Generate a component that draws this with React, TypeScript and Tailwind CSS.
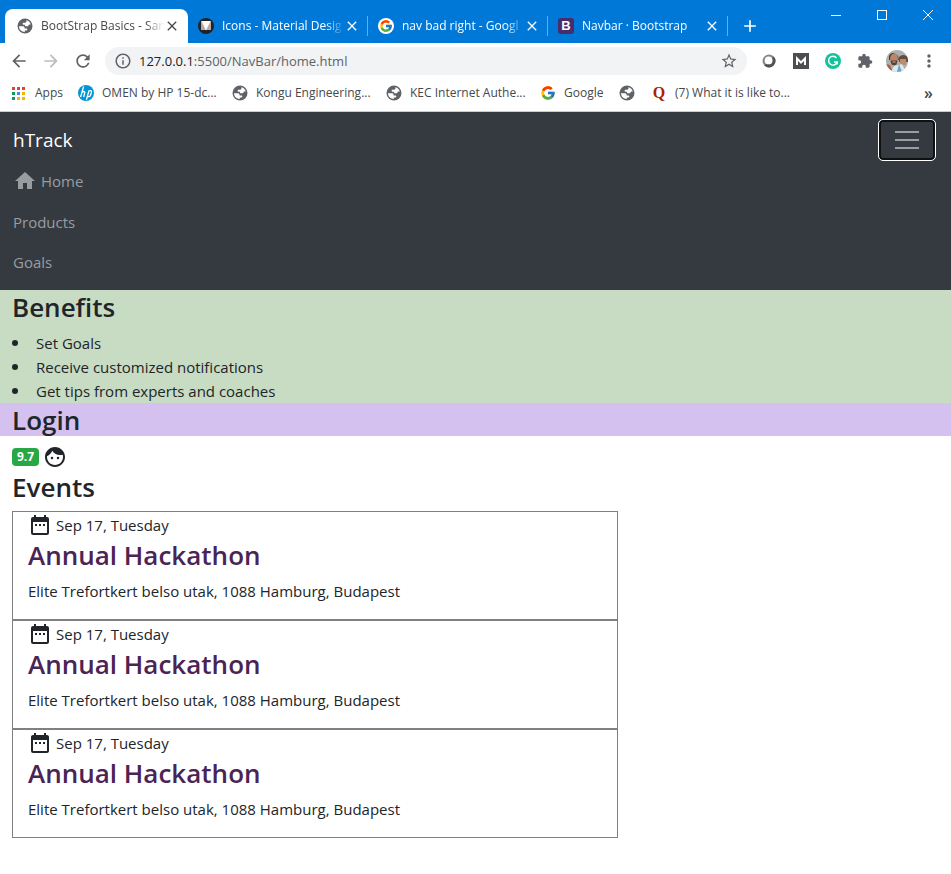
import React from "react";
import { FcGoogle } from "react-icons/fc";
import {
  MdClose,
  MdDateRange,
  MdExtension,
  MdFace,
  MdHome,
  MdStarBorder,
  MdArrowBack,
  MdArrowForward,
  MdRefresh,
  MdMoreVert,
  MdInfoOutline,
  MdAdd,
} from "react-icons/md";

function Globe() {
  return (
    <svg viewBox="0 0 16 16" className="size-4 shrink-0" aria-hidden="true">
      <circle cx="8" cy="8" r="7.5" fill="#5f6368" />
      <path
        d="M2 8.200h3.600c1.200 0 2 .7 2 1.700v.6h1.700c.6 0 1 .4 1 .9s-.4.9-1 1H7.800v1.500C4.600 13.800 2 11.400 2 8.200zM9.400 2.200c2.200.5 3.900 2.200 4.400 4.400h-1.500c-.4 0-.8.2-.8.7 0 .6-.5 1-1.100 1H9.100c-.7 0-1.200-.4-1.200-1V6.700H6.500c-.5 0-.9-.4-.9-.9 0-.6.4-1 1-1h1.600c.7 0 1.200-.5 1.200-1.200z"
        fill="#fff"
      />
    </svg>
  );
}

function MaterialIcon() {
  return (
    <svg viewBox="0 0 16 16" className="size-4 shrink-0" aria-hidden="true">
      <circle cx="8" cy="8" r="8" fill="#1f2226" />
      <path d="M3 3h10v9H3z" fill="#b9aaa2" />
      <path d="M3.500 3h9L8 12.500z" fill="#fff" />
    </svg>
  );
}

function GoogleDisc() {
  return (
    <span className="grid size-4 shrink-0 place-items-center rounded-full bg-white">
      <FcGoogle className="size-[14px]" />
    </span>
  );
}

function BootstrapIcon() {
  return (
    <span className="grid size-4 shrink-0 place-items-center rounded-[3px] bg-[#4a2c6b] font-['Liberation_Sans'] text-[13px] leading-4 font-bold text-white">
      B
    </span>
  );
}

const tabs = [
  { title: "Icons - Material Desig", icon: <MaterialIcon /> },
  { title: "nav bad right - Googl", icon: <GoogleDisc /> },
  { title: "Navbar · Bootstrap", icon: <BootstrapIcon /> },
];

const tabTitle = "ml-2 flex-1 overflow-hidden whitespace-nowrap mask-r-from-85% mask-r-to-100%";

function TabStrip() {
  return (
    <div className="flex h-[43px] items-end bg-[#0078d7] pl-[5px] text-[12px] text-white">
      <div className="flex h-[34px] w-[183px] items-center rounded-t-lg bg-white pr-2 pl-3 text-[#45494d]">
        <Globe />
        <span className={tabTitle}>BootStrap Basics - San</span>
        <button type="button" aria-label="Close tab">
          <MdClose className="size-4" />
        </button>
      </div>
      {tabs.map((tab) => (
        <div key={tab.title} className="flex h-[34px] w-[180px] items-center pl-[10px]">
          {tab.icon}
          <span className={tabTitle}>{tab.title}</span>
          <button type="button" aria-label="Close tab" className="mr-[7px]">
            <MdClose className="size-4" />
          </button>
          <span className="h-5 w-px bg-[#66aee7]" />
        </div>
      ))}
      <button type="button" aria-label="New tab" className="ml-3 grid h-[34px] place-items-center">
        <MdAdd className="size-5" />
      </button>
      <div className="ml-auto flex self-start pt-[6px]">
        <button type="button" aria-label="Minimize" className="grid h-[18px] w-[46px] place-items-center">
          <span className="h-px w-[10px] bg-white" />
        </button>
        <button type="button" aria-label="Maximize" className="grid h-[18px] w-[46px] place-items-center">
          <span className="size-[10px] border border-white" />
        </button>
        <button type="button" aria-label="Close" className="grid h-[18px] w-[46px] place-items-center">
          <svg viewBox="0 0 10 10" className="size-[10px]">
            <path d="M0 0l10 10M10 0L0 10" stroke="#fff" />
          </svg>
        </button>
      </div>
    </div>
  );
}

function Toolbar() {
  return (
    <div className="flex h-9 items-center pr-3 pl-[9px] text-[#5f6368]">
      <button type="button" aria-label="Back">
        <MdArrowBack className="size-5" />
      </button>
      <button type="button" aria-label="Forward" className="ml-3 text-[#babcbe]">
        <MdArrowForward className="size-5" />
      </button>
      <button type="button" aria-label="Reload" className="ml-3">
        <MdRefresh className="size-5" />
      </button>
      <div className="ml-3 flex h-7 flex-1 items-center rounded-full bg-[#f1f3f4] px-[9px]">
        <MdInfoOutline className="size-[18px]" />
        <span className="ml-[7px] flex-1 text-[13px]">
          <span className="text-[#202124]">127.0.0.1</span>:5500/NavBar/home.html
        </span>
        <button type="button" aria-label="Bookmark">
          <MdStarBorder className="size-[18px]" />
        </button>
      </div>
      <div className="ml-[14px] flex items-center gap-4">
        <svg viewBox="0 0 16 16" className="size-4">
          <circle cx="8" cy="8" r="6.500" fill="#85888b" />
          <path d="M12.600 3.400a6.500 6.500 0 0 1-9.200 9.200z" fill="#505356" />
          <circle cx="7.600" cy="7.400" r="3.900" fill="#fff" />
        </svg>
        <svg viewBox="0 0 16 16" className="size-4">
          <path fill="#4c4f52" d="M0 0h16v16H0z" />
          <path d="M4 12V5.500l4 4 4-4V12" fill="none" stroke="#fff" strokeWidth="2" />
        </svg>
        <svg viewBox="0 0 16 16" className="size-4">
          <circle cx="8" cy="8" r="8" fill="#15c39a" />
          <path d="M11.500 5A4.400 4.400 0 1 0 12.200 9H9M12.200 9v2.500" fill="none" stroke="#fff" strokeWidth="1.400" />
        </svg>
        <MdExtension className="size-4" />
      </div>
      <svg viewBox="0 0 22 22" className="ml-[13px] size-[22px]">
        <clipPath id="avatar">
          <circle cx="11" cy="11" r="11" />
        </clipPath>
        <g clipPath="url(#avatar)">
          <path fill="#a9b2af" d="M0 0h22v22H0z" />
          <path fill="#6b4a3d" d="M13 7q4-4 9 0v5h-9z" />
          <path fill="#c08a6c" d="M14 9h6v6h-6z" />
          <path fill="#3f3836" d="M3 6q3-6 9 0l1 4H3z" />
          <ellipse cx="8" cy="9" rx="4" ry="5.500" fill="#bd8569" />
          <path fill="#5a3f36" d="M4.500 10.500h7l-1 4-2.500 1-2.500-1z" />
          <path fill="#dcae93" d="M6.500 11.500h3v1h-3z" />
          <path fill="#b0603c" d="M0 14l4 1 3 7H0z" />
          <path fill="#dce9ef" d="M5 22l3-6 8-2 4 8z" />
          <path fill="#69a6ca" d="M11 22l2-8 3 8z" />
        </g>
      </svg>
      <button type="button" aria-label="Menu" className="ml-[11px]">
        <MdMoreVert className="size-5" />
      </button>
    </div>
  );
}

const appColors = [
  "bg-[#db4437]", "bg-[#db4437]", "bg-[#db4437]",
  "bg-[#0f9d58]", "bg-[#4285f4]", "bg-[#f4b400]",
  "bg-[#0f9d58]", "bg-[#f4b400]", "bg-[#f4b400]",
];

function Bookmarks() {
  return (
    <div className="flex h-[33px] items-center border-b border-[#c9cbcd] pb-1 pl-3 text-[12px] whitespace-nowrap text-[#45494d]">
      <a href="#apps" className="flex w-[66px] items-center">
        <span className="mr-[10px] grid grid-cols-3 gap-[2px]">
          {appColors.map((c, i) => (
            <span key={i} className={"size-[3px] " + c} />
          ))}
        </span>
        Apps
      </a>
      <a href="#omen" className="flex w-[154px] items-center gap-2">
        <svg viewBox="0 0 16 16" className="size-4">
          <circle cx="8" cy="8" r="8" fill="#0096d6" />
          <path
            d="M5.600 1.500L2.600 12M3.800 7.600q2.600-2.200 3 0L5.600 12M8.400 14.800L11 5.800q3.200-1 2.400 1.700l-1 3q-.7 1.600-3 .9"
            fill="none"
            stroke="#fff"
            strokeWidth="1.300"
          />
        </svg>
        OMEN by HP 15-dc...
      </a>
      <a href="#kongu" className="flex w-[154px] items-center gap-2">
        <Globe />
        Kongu Engineering...
      </a>
      <a href="#kec" className="flex w-[154px] items-center gap-2">
        <Globe />
        KEC Internet Authe...
      </a>
      <a href="#google" className="flex w-[79px] items-center gap-2">
        <FcGoogle className="size-4" />
        Google
      </a>
      <a href="#site" aria-label="Site" className="flex w-8 items-center">
        <Globe />
      </a>
      <a href="#quora" className="flex items-center gap-2">
        <span className="w-4 text-center font-['Liberation_Serif'] text-[16px] leading-4 font-bold text-[#a82400]">Q</span>
        (7) What it is like to...
      </a>
      <button type="button" aria-label="More bookmarks" className="mr-[18px] ml-auto text-[16px] leading-4 font-semibold">
        »
      </button>
    </div>
  );
}

const heading = "text-[26px] leading-[34px] font-semibold";

function EventCard() {
  return (
    <article className="border border-[#808080] px-[15px] pb-4">
      <p className="flex h-[26px] items-center gap-1">
        <MdDateRange className="size-6" />
        Sep 17, Tuesday
      </p>
      <h3 className={heading + " mb-[7px] text-[#4b2354]"}>Annual Hackathon</h3>
      <p>Elite Trefortkert belso utak, 1088 Hamburg, Budapest</p>
    </article>
  );
}

export default function App() {
  return (
    <div className="min-h-screen bg-white font-['Open_Sans','Noto_Sans',sans-serif] text-[15px] leading-6 text-[#212529]">
      <header>
        <TabStrip />
        <Toolbar />
        <Bookmarks />
      </header>
      <nav className="bg-[#343a40] py-2 pr-4 pl-[13px]">
        <div className="flex h-10 items-center justify-between">
          <a href="#home" className="text-[19px] text-white">hTrack</a>
          <button
            type="button"
            aria-label="Toggle navigation"
            className="flex h-10 w-14 flex-col items-center justify-center gap-[6px] rounded border-2 border-[#101010] outline outline-white"
          >
            <span className="h-[2px] w-6 bg-[#9a9da0]" />
            <span className="h-[2px] w-6 bg-[#9a9da0]" />
            <span className="h-[2px] w-6 bg-[#9a9da0]" />
          </button>
        </div>
        <ul className="text-[#999da0]">
          <li>
            <a href="#home" className="flex h-[42px] items-center gap-1">
              <MdHome className="size-6" />
              Home
            </a>
          </li>
          <li>
            <a href="#products" className="flex h-10 items-center">Products</a>
          </li>
          <li>
            <a href="#goals" className="flex h-10 items-center">Goals</a>
          </li>
        </ul>
      </nav>
      <main>
        <section className="bg-[#c8dbc3] px-3">
          <h2 className={heading + " mb-[7px]"}>Benefits</h2>
          <ul className="list-inside list-disc marker:text-[17px]">
            <li className="h-6">Set Goals</li>
            <li className="h-6">Receive customized notifications</li>
            <li className="h-6">Get tips from experts and coaches</li>
          </ul>
        </section>
        <section className="mb-2 bg-[#d4c1f0] px-3">
          <h2 className={heading + " h-[33px]"}>Login</h2>
        </section>
        <section className="w-2/3 pr-4 pl-3">
          <div className="flex h-[26px] items-center gap-1">
            <span className="rounded bg-[#28a745] px-[5px] text-[12px] leading-[18px] font-bold text-white">9.7</span>
            <MdFace className="size-6" />
          </div>
          <h2 className={heading + " mb-[7px]"}>Events</h2>
          <EventCard />
          <EventCard />
          <EventCard />
        </section>
      </main>
    </div>
  );
}
